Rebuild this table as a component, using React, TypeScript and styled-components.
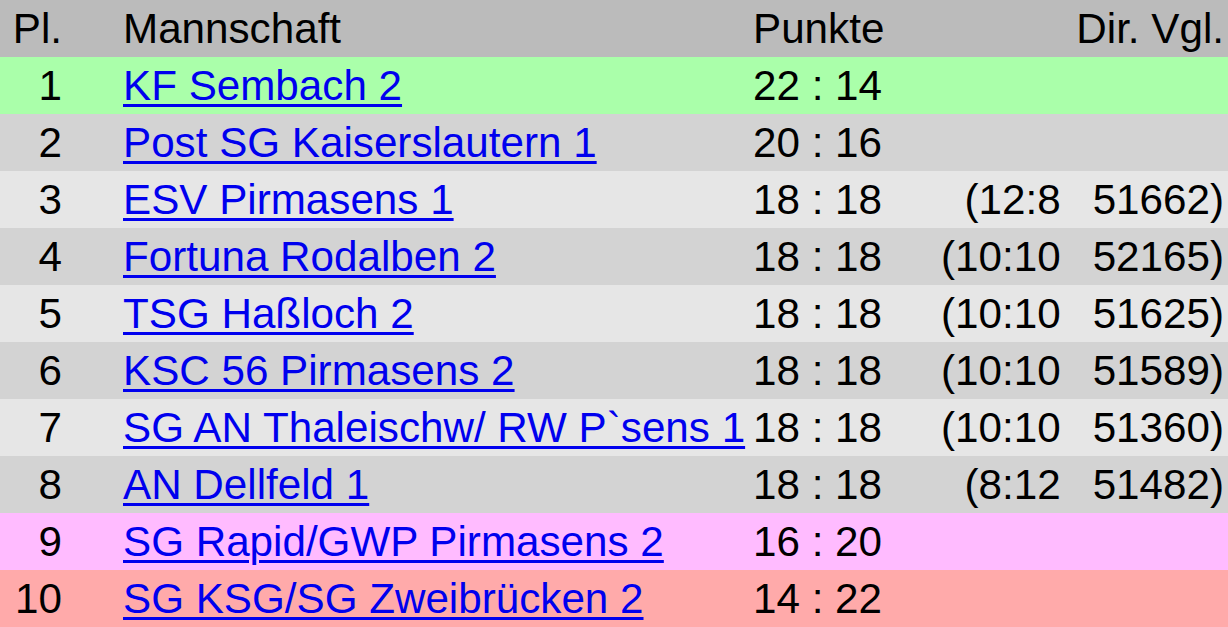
import styled, { createGlobalStyle } from "styled-components";

const GlobalStyle = createGlobalStyle`
  html, body {
    margin: 0;
    padding: 0;
    background: #ffffff;
  }
  body {
    font-family: "Liberation Sans", Arial, sans-serif;
  }
`;

type Tone = "head" | "up" | "dark" | "light" | "pink" | "down";

const tones: Record<Tone, string> = {
  head: "#bbbbbb",
  up: "#aaffaa",
  dark: "#d3d3d3",
  light: "#e6e6e6",
  pink: "#ffbbff",
  down: "#ffaaaa",
};

const Table = styled.div`
  width: 1228px;
  display: flex;
  flex-direction: column;
`;

const Row = styled.div<{ $tone: Tone }>`
  display: grid;
  grid-template-columns: 64px 689px 1fr 1fr;
  height: 57px;
  align-items: center;
  background: ${(p) => tones[p.$tone]};
  font-size: 42.2px;
  line-height: 57px;
  color: #000000;
  white-space: pre;
`;

const Place = styled.div`
  text-align: right;
  padding-right: 2px;
`;

const Team = styled.div`
  padding-left: 59px;
`;

const TeamLink = styled.a`
  color: #0000ee;
  text-decoration: underline;
  text-decoration-thickness: 3px;
  text-underline-offset: 4px;
`;

const Points = styled.div`
  text-align: left;
`;

const Direct = styled.div`
  display: flex;
  justify-content: flex-end;
  gap: 32px;
  padding-right: 4px;
`;

interface Entry {
  place: number;
  team: string;
  points: string;
  direct?: [string, string];
  tone: Tone;
}

const entries: Entry[] = [
  { place: 1, team: "KF Sembach 2", points: "22 : 14", tone: "up" },
  { place: 2, team: "Post SG Kaiserslautern 1", points: "20 : 16", tone: "dark" },
  { place: 3, team: "ESV Pirmasens 1", points: "18 : 18", direct: ["(12:8", "51662)"], tone: "light" },
  { place: 4, team: "Fortuna Rodalben 2", points: "18 : 18", direct: ["(10:10", "52165)"], tone: "dark" },
  { place: 5, team: "TSG Haßloch 2", points: "18 : 18", direct: ["(10:10", "51625)"], tone: "light" },
  { place: 6, team: "KSC 56 Pirmasens 2", points: "18 : 18", direct: ["(10:10", "51589)"], tone: "dark" },
  { place: 7, team: "SG AN Thaleischw/ RW P`sens 1", points: "18 : 18", direct: ["(10:10", "51360)"], tone: "light" },
  { place: 8, team: "AN Dellfeld 1", points: "18 : 18", direct: ["(8:12", "51482)"], tone: "dark" },
  { place: 9, team: "SG Rapid/GWP Pirmasens 2", points: "16 : 20", tone: "pink" },
  { place: 10, team: "SG KSG/SG Zweibrücken 2", points: "14 : 22", tone: "down" },
];

const App = () => {
  return (
    <>
      <GlobalStyle />
      <Table>
        <Row $tone="head">
          <Place>Pl.</Place>
          <Team>Mannschaft</Team>
          <Points>Punkte</Points>
          <Direct>Dir. Vgl.</Direct>
        </Row>
        {entries.map((e) => (
          <Row key={e.place} $tone={e.tone}>
            <Place>{e.place}</Place>
            <Team>
              <TeamLink href="#">{e.team}</TeamLink>
            </Team>
            <Points>{e.points}</Points>
            <Direct>
              {e.direct && (
                <>
                  <span>{e.direct[0]}</span>
                  <span>{e.direct[1]}</span>
                </>
              )}
            </Direct>
          </Row>
        ))}
      </Table>
    </>
  );
};

export default App;
